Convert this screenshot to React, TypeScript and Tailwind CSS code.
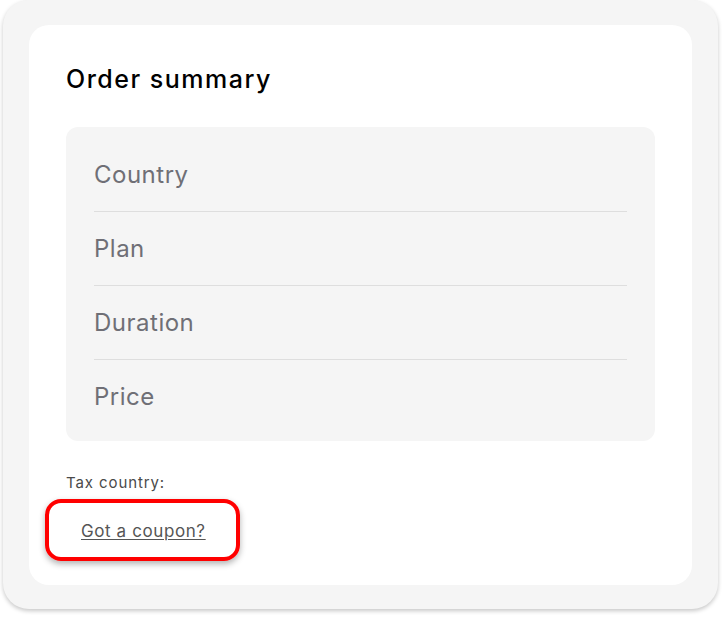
import React from "react";

export default function App() {
  const rows = ["Country", "Plan", "Duration", "Price"];
  return (
    <div className="w-[722px] h-[618px] bg-white pl-[3px] pr-[4px] font-['Inter',sans-serif]">
      <div className="w-[715px] h-[609px] bg-[#f5f5f5] rounded-[26px] shadow-[0_2px_4px_rgba(0,0,0,0.22)] pt-[25px] pl-[26px] pr-[26px] pb-[24px]">
        <div className="h-[560px] bg-white rounded-[20px] px-[37px] pt-[38px]">
          <h2 className="text-[25px] leading-[32px] font-medium text-black tracking-[1.5px]">Order summary</h2>
          <div className="mt-[32px] bg-[#f5f5f5] rounded-[12px] px-[28px] pt-[11px] pb-[7px]">
            {rows.map((r, i) => (
              <div
                key={r}
                className={
                  i < rows.length - 1
                    ? "h-[74px] flex items-center border-b border-[#dedede] text-[24px] text-[#6f6f76] tracking-[0.5px]"
                    : "h-[74px] flex items-center text-[24px] text-[#6f6f76] tracking-[0.5px]"
                }
              >
                {r}
              </div>
            ))}
          </div>
          <div className="mt-[32px] text-[15px] leading-[20px] text-[#4a4a4a] tracking-[0.9px]">Tax country:</div>
          <div className="mt-[6px] ml-[-21px] w-[195px] h-[62px] border-[4px] border-[#ff0000] rounded-[16px] shadow-[0_3px_6px_rgba(0,0,0,0.3)] flex items-center pl-[32px] pt-[1px]">
            <a href="#" className="text-[17px] leading-[22px] text-[#555] underline underline-offset-2 tracking-[0.6px]">
              Got a coupon?
            </a>
          </div>
        </div>
      </div>
    </div>
  );
}
